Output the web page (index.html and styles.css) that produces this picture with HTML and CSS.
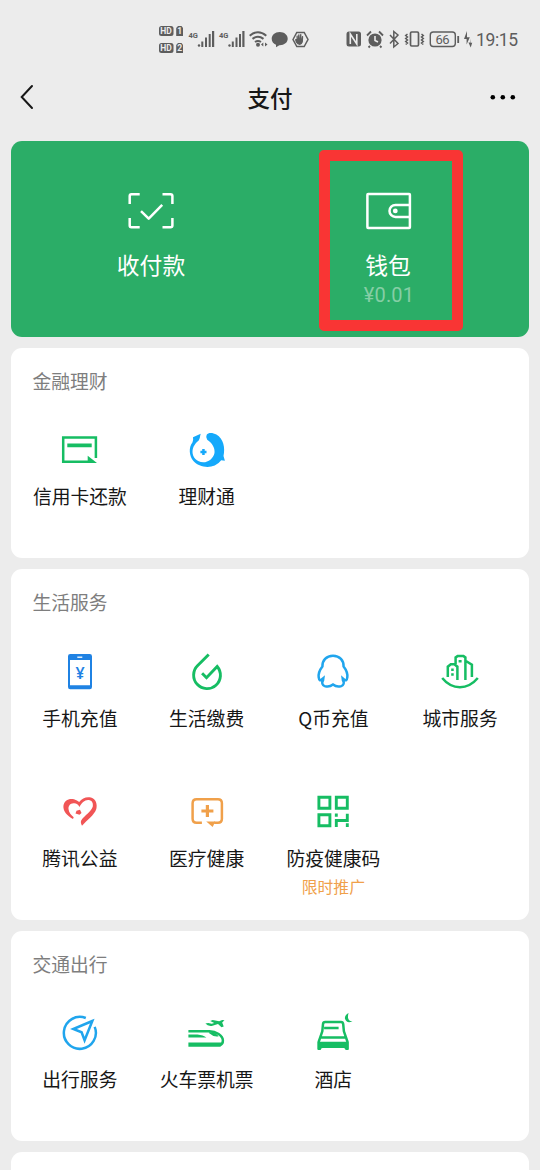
FILE: index.html
```html
<!DOCTYPE html>
<html lang="zh-CN">
<head>
<meta charset="utf-8">
<title>支付</title>
<link rel="stylesheet" href="styles.css">
</head>
<body>
<div class="status">
  <svg class="status-left" viewBox="150 15 170 50" width="170" height="50">
    <g class="solid">
      <rect x="159" y="26" width="14.5" height="10" rx="2.5"/><path d="M178 26h3.500l1.500 2v8h-6.800v-8z"/>
      <rect x="159" y="43" width="14.500" height="10" rx="2.500"/><path d="M178 43h3.500l1.500 2v8h-6.800v-8z"/>
      <circle cx="199" cy="45.500" r="1.200"/><circle cx="229.500" cy="45.500" r="1.200"/>
      <path d="M201.300 41.500h2v5.500h-2zM205 37.500h2v9.500h-2zM208.700 34h2v13h-2zM212 31h2.200v16h-2.200z"/>
      <path d="M231.800 41.500h2v5.500h-2zM235.500 37.500h2v9.500h-2zM239 34h2v13h-2zM242.300 31h2.200v16h-2.200z"/>
      <circle cx="258" cy="44.700" r="2"/><path d="M261 44.500l2.300-2v4zM267.500 44.500l-2.500-2v4z"/>
      <path d="M279.700 32c-4.800 0-8 3-8 6.800 0 3 1.700 5 4.300 6v2.400l3.300-2c4.800.2 8.400-2.500 8.400-6.400 0-4-3.400-6.800-8-6.800z"/>
      <path d="M296.500 39v-3.200q.8-.8 1.300 0V39l.4-4.400q.7-.8 1.300 0l.2 4 .4-4.300q.7-.7 1.300 0v4.800l.6-3q.8-.5 1.200.3l-.3 5.600q-1 2.800-3 2.900-2.400.1-4-2.300l-1-3.100q.5-.8 1.600-.5z"/>
    </g>
    <g class="line">
      <path d="M249.700 35.700q8.300-7 16.600 0M252.500 38.900q5.500-4.300 11 0M255 42q3-2 6 0" stroke-width="2"/>
      <path d="M293 39.500l3.800-7h7.400l3.800 7-3.800 7h-7.400z" stroke-width="1.500"/>
    </g>
    <g class="cut"><text x="160.300" y="34.200">HD</text><text x="177.300" y="34.200">1</text><text x="160.300" y="51.200">HD</text><text x="177.300" y="51.200">2</text></g>
    <g class="net"><text x="188.500" y="38.300">4G</text><text x="219" y="38.300">4G</text></g>
  </svg>
  <svg class="status-right" viewBox="335 15 205 50" width="205" height="50">
    <g class="solid">
      <rect x="346.500" y="31.500" width="14.500" height="15" rx="2.500"/>
      <circle cx="375" cy="40" r="6.600"/><path d="M367 35.500l4-4M383 35.500l-4-4M370 46l-1.500 1.500M380 46l1.500 1.500" stroke="#5d5d5d" stroke-width="1.800"/>
      <path d="M457.300 36h1.800v7h-1.800zM467 31l-3 8h2.600v5.500l3.200-7.300h-2.800zM470 38.500v4h-1.500l2.200 5 1.500-4.700h-1.700z"/>
    </g>
    <path class="notch" d="M350.300 44v-10l6.500 10v-10M375 36v4.500l3 1.500"/>
    <g class="line">
      <path d="M390 35l8 8.500-4.200 3.500V31.500l4.200 3.500-8 8.500" stroke-width="1.500"/>
      <rect x="410.500" y="32" width="8" height="14" rx="1.200" stroke-width="1.700"/>
      <path d="M407.500 34l-1.800 1.500 1.800 1.500-1.800 1.500 1.800 1.500-1.800 1.500 1.800 1.500-1.800 1.500M421.500 34l1.800 1.500-1.800 1.500 1.800 1.500-1.800 1.500 1.800 1.500-1.800 1.500 1.800 1.500" stroke-width="1.500"/>
      <rect x="430.300" y="32" width="25" height="14.500" rx="3" stroke-width="1.400"/>
    </g>
    <text class="battery" x="435.500" y="43.700" textLength="14">66</text>
    <text class="clock" x="476" y="46.200" textLength="42">19:15</text>
  </svg>
</div>
<header class="nav">
  <svg viewBox="14 82 30 30" width="30" height="30"><path class="ink" d="M31 86l-10.300 11 10.300 11"/></svg>
  <h1>支付</h1>
  <svg viewBox="487.500 82 30 30" width="30" height="30"><circle cx="492.300" cy="97.300" r="2.300"/><circle cx="502.300" cy="97.300" r="2.300"/><circle cx="512.300" cy="97.300" r="2.300"/></svg>
</header>
<main>
  <section class="hero">
    <div class="hero-item">
      <svg viewBox="125 187 52 48" width="52" height="48"><g class="white"><path d="M129.700 204v-8q0-1.700 1.700-1.700h8.300M162.500 194.300h8q1.900 0 1.900 1.700v8M129.700 218v7.500q0 1.800 1.700 1.800h8.300M162.500 227.300h8q1.900 0 1.900-1.800V218"/><path d="M141 211.200l7.700 7.500 13.500-13.800"/></g></svg>
      <span class="hero-label">收付款</span>
    </div>
    <div class="hero-item wallet">
      <svg viewBox="362 187 52 48" width="52" height="48"><g class="white"><rect x="367.400" y="194.100" width="42.500" height="33.900" rx=".7"/><path d="M409.500 204.900h-14a6 6 0 0 0 0 12h14"/></g><circle cx="395.300" cy="210.900" r="2.400" fill="#fff"/></svg>
      <span class="hero-label">钱包</span>
      <span class="balance">¥0.01</span>
      <i class="highlight"></i>
    </div>
  </section>

  <section class="card">
    <h2>金融理财</h2>
    <div class="grid">
      <div class="tile"><svg viewBox="56 427 48 48"><path class="green" d="M95.900 459v-20.500H63.200v24.300H89"/><path class="fgreen" d="M67.300 444.500h24.400v3.800H67.300zM87.700 456.700l9.300 7.300h-9.300z"/></svg><span>信用卡还款</span></div>
      <div class="tile"><svg viewBox="183.300 427 48 48"><path class="fblue" d="M201 434.800l-7.700 3.400q.6 3-.6 5.300c-4 5-3.200 13.500 1 18.500 4.500 5.500 14.300 7.500 21.300 4.500q4-1.800 6.500-5.200l3.700.5-1.400-4.800c1.900-8 0-17.500-7.100-21.500-3.500-2-8.200-2.400-9.700.3q-1.300 2.700.5 4.900c4.500 2.800 8 7.800 7.300 13.300-1.300 5.500-5.800 9.300-11.300 9.300-6.500-.2-10.700-5.300-10.700-10.300 0-5.500 3.200-9 6.200-11.500 1.500-2 1.200-4.500 2-6.700z"/><path class="fblue" d="M202.500 450h2.500v1.800h1.800v2.500h-1.800v1.800h-2.500v-1.800h-1.800v-2.500h1.800z"/></svg><span>理财通</span></div>
    </div>
  </section>

  <section class="card">
    <h2>生活服务</h2>
    <div class="grid">
      <div class="tile"><svg viewBox="56 648 48 48"><path fill="#1f82e3" fill-rule="evenodd" d="M70.200 654h19.600q2.200 0 2.200 2.200V687q0 2.300-2.200 2.300H70.200Q68 689.300 68 687v-30.800q0-2.200 2.200-2.200zM70 660v25.200h20V660z"/><path d="M77.300 657.200h5" stroke="#fff" stroke-width="1.300"/><text class="yen" x="80" y="679" text-anchor="middle">¥</text></svg><span>手机充值</span></div>
      <div class="tile"><svg viewBox="183.300 648 48 48"><path class="green drop" d="M209 654.500l-11 11.100a13.400 13.400 0 1 0 19.500.9l-10.700 11.200-4.400-4.500"/></svg><span>生活缴费</span></div>
      <div class="tile"><svg viewBox="309.400 648 48 48"><path class="blue" d="M333.400 655.800c-6.800 0-10.800 4.700-10.600 10.800-2.500 3.200-4.200 7-3.700 10.800.4 3 1.500 3.400 3 2.200l1.600-1.300-.3 2.200c-1.500 2.200-.8 4.600 1.800 5.600 2.800 1 5.500.6 8.200-1.500 2.700 2.100 5.400 2.500 8.200 1.500 2.600-1 3.300-3.400 1.800-5.600l-.3-2.200 1.600 1.300c1.500 1.200 2.600.8 3-2.200.5-3.800-1.200-7.600-3.700-10.800.2-6.100-3.800-10.800-10.600-10.800z"/></svg><span>Q币充值</span></div>
      <div class="tile"><svg viewBox="436.100 648 48 48"><path class="green" d="M442.300 678q7.500 9.200 17.700 9.200t17.900-9.200M447.900 677v-10.300l3-2.500h3.600l3 2.500V680M455.700 664v-6.600l2-1.300h5.900l1.900 1.300V680M466 661l6 3.800V677"/><path class="fgreen" d="M458.700 660h3v2.500h-3zM451.300 668.500h2.500v2.500h-2.500zM451.300 673.200h2.500v2.500h-2.500z"/></svg><span>城市服务</span></div>
      <div class="tile"><svg viewBox="56 788 48 48"><path fill="#f15556" d="M73 818.900c-6-3-10-7.900-9.600-12.900.6-5.500 5.600-8 10.600-6.700q3.200.9 5.200 2.700c2.800-4 7.800-5.700 11.800-4.400 5 1.400 6.500 6.900 5.300 11.400-1.800 6-9.300 11-14.300 16.800q-2-3.800-.5-5.800c3-4.500 10-8.500 11.300-13.500.7-4.500-1.800-6.500-4.800-6.500-3.500.2-6.500 3-8.500 7-1-2.500-3.500-4-6-3.700-3.500.2-5.200 2.700-5 5.700.3 3.500 2.700 6.200 5.200 8.200z"/><path fill="#f15556" d="M80 809.800l1.500 3.200-2 1.800-4-1.300 1-2.800z"/></svg><span>腾讯公益</span></div>
      <div class="tile"><svg viewBox="182.600 788 48 48"><path class="orange" d="M201.500 822.700h-5.300q-4 0-4-4v-15.500q0-4 4-4h21.300q4 0 4 4v15.500q0 4-4 4h-3.800"/><path class="orange plus" d="M201 811h12M207 805v12"/><path fill="#f0a04a" d="M205.800 821.500h9l-2.500 5.500z"/></svg><span>医疗健康</span></div>
      <div class="tile"><svg viewBox="309.400 788 48 48"><path class="green qr" d="M319.300 797.300h11v11h-11zM336.700 797.300h11v11h-11zM319.300 814.700h11v11h-11zM336.700 827v-6.500h11v-6.800M336.700 813.500v3.200M347.700 823.200v3.800"/></svg><span>防疫健康码</span><em>限时推广</em></div>
    </div>
  </section>

  <section class="card">
    <h2>交通出行</h2>
    <div class="grid">
      <div class="tile"><svg viewBox="56 1009 48 48"><path class="blue" d="M85.800 1018a16 16 0 1 0 8.900 8.900M92.300 1021l-19 8 8.300 3.300 3 8z"/></svg><span>出行服务</span></div>
      <div class="tile"><svg viewBox="183.300 1009 48 48"><path class="green" d="M188.700 1031.200h21c6.500 0 13.500 4.500 13.500 9.500q0 3.500-3 4.500"/><path class="fgreen" d="M188.700 1042.500h33.500l-1.500 4.300h-32zM188.700 1034.500h9q6 .5 9 3h-18zM209 1032.300q6-1 10 4-5 1-9.500-3zM205.700 1023.600l2.800-.6 3.500.8 2.500-.9-4-2 2.500-.9 6.500 1.300 3-1.400 2.300.4-2.300 2.200 1.500 4-2.200.7-3.500-3.300-6.300 2.100q-4 .5-6.300-2.400z"/></svg><span>火车票机票</span></div>
      <div class="tile"><svg viewBox="309.400 1009 48 48"><path class="green" d="M319.200 1049v-7.500l3.500-10.200.7-7.200q.2-2.200 2.200-2.200h15.800q2 0 2.200 2.200l.7 7.200 3.500 10.200v7.500M324.500 1028h14.500M321 1037.500h25.500"/><path class="fgreen" d="M318 1041.700h31v8.200h-3q-.3-2-2-2h-21q-1.700 0-2 2h-3zM349 1013q-4.300 2.500-3.600 5.800 1.800 5.100 7.500 2.400-4.200.2-4.500-3.600-.1-2.600.6-4.600z"/></svg><span>酒店</span></div>
    </div>
  </section>
  <section class="card peek"></section>
</main>
</body>
</html>
```
FILE: styles.css
```css
* { box-sizing: border-box; }
html { height: 1170px; overflow: hidden; }
body {
  margin: 0;
  height: 1170px;
  overflow: hidden;
  background: #ececec;
  color: #171717;
  font-family: "Noto Sans CJK SC", sans-serif;
}
svg { display: block; flex: none; }
h1, h2 { margin: 0; }

.status {
  display: flex;
  justify-content: space-between;
  height: 65px;
  padding: 15px 0 0 150px;
}
.solid { fill: #5d5d5d; }
.line { fill: none; stroke: #5d5d5d; }
.notch { fill: none; stroke: #ececec; stroke-width: 1.6; }
.cut { fill: #ececec; font: 700 8.5px Roboto, sans-serif; }
.net { fill: #5d5d5d; font: 700 7.5px Roboto, sans-serif; }
.battery { fill: #5d5d5d; font: 400 13px Roboto, sans-serif; }
.clock { fill: #5d5d5d; font: 400 17.5px Roboto, sans-serif; }

.nav {
  display: flex;
  align-items: center;
  justify-content: space-between;
  height: 64px;
  padding: 0 22px 0 15px;
}
.nav h1 {
  font-size: 22.5px;
  font-weight: 500;
  line-height: 30px;
  padding-left: 7px;
  margin-top: -1px;
}
.ink { fill: none; stroke: #171717; stroke-width: 2; stroke-linecap: round; }

main {
  display: flex;
  flex-direction: column;
  gap: 11px;
  padding: 11.500px 11px 0;
}
.hero {
  display: grid;
  grid-template-columns: 237px 237px;
  padding: 46.500px 0 0 21.500px;
  height: 196px;
  border-radius: 11px;
  background: #2bad67;
  color: #fff;
}
.hero-item {
  position: relative;
  display: flex;
  flex-direction: column;
  align-items: center;
}
.hero-label { margin-top: 15px; font-size: 22.8px; line-height: 30px; }
.balance {
  font: 400 20px/22px Roboto, sans-serif;
  margin: 4px 0 0 2px;
  color: #85cea5;
  letter-spacing: .2px;
}
.highlight {
  position: absolute;
  left: 49.500px;
  top: -37px;
  width: 143.500px;
  height: 180.500px;
  border: 11.300px solid #f93534;
  border-radius: 5px;
}
.white { fill: none; stroke: #fff; stroke-width: 2.5; stroke-linejoin: round; }

.card {
  flex: none;
  padding: 20px 5.500px 0;
  border-radius: 11px;
  background: #fff;
}
.card h2 {
  padding-left: 16px;
  height: 50.500px;
  font-size: 18.800px;
  font-weight: 400;
  line-height: 25px;
  color: #7e7e7e;
}
.grid { display: grid; grid-template-columns: repeat(4, 1fr); grid-auto-rows: 140px; }
.tile {
  display: flex;
  flex-direction: column;
  align-items: center;
  padding-top: 8px;
}
.tile svg { width: 48px; height: 48px; }
.tile span { margin-top: 10px; font-size: 18.800px; line-height: 24px; white-space: nowrap; }
.tile em { margin-top: 7px; font-size: 15.800px; font-style: normal; line-height: 20px; color: #f0a04a; }
.peek { height: 60px; }

.green, .blue, .orange { fill: none; stroke-width: 2.5; }
.green { stroke: #16bd63; }
.blue { stroke: #20a5ed; }
.orange { stroke: #f0a04a; }
.drop, .qr { stroke-width: 2.9; }
.plus { stroke-width: 3.2; }
.fgreen { fill: #16bd63; }
.fblue { fill: #15a9fb; }
.yen { fill: #1f82e3; font: 600 16px "Noto Sans", sans-serif; }
```
